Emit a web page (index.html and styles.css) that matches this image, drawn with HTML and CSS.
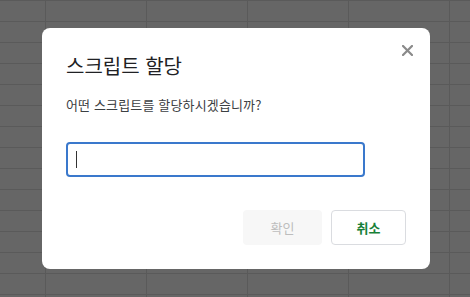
FILE: index.html
```html
<!DOCTYPE html>
<html lang="ko">
<head>
  <meta charset="UTF-8">
  <title>스크립트 할당</title>
  <link rel="stylesheet" href="styles.css">
</head>
<body>
  <div class="dialog">
    <button class="close-btn" aria-label="닫기">
      <svg width="11" height="11" viewBox="0 0 11 11">
        <path d="M1 1 L10 10 M10 1 L1 10" stroke="#8a8a8a" stroke-width="2.2" stroke-linecap="square"/>
      </svg>
    </button>
    <div class="dialog-title">스크립트 할당</div>
    <div class="dialog-text">어떤 스크립트를 할당하시겠습니까?</div>
    <div class="input-box"><span class="caret"></span></div>
    <div class="dialog-buttons">
      <button class="btn btn-ok">확인</button>
      <button class="btn btn-cancel">취소</button>
    </div>
  </div>
</body>
</html>
```

FILE: styles.css
```css
html, body {
  margin: 0;
  height: 100%;
}
body {
  font-family: "Noto Sans CJK KR", "Noto Sans", sans-serif;
  background-color: #666666;
  background-image:
    linear-gradient(to right, #5a5a5a 1px, transparent 1px),
    linear-gradient(to bottom, #5a5a5a 1px, transparent 1px);
  background-size: 101px 21px;
  background-position: 45px 0, 0 0;
  box-sizing: border-box;
  padding-left: 2px;
  display: flex;
  align-items: center;
  justify-content: center;
}
.dialog {
  position: relative;
  box-sizing: border-box;
  width: 388px;
  height: 241px;
  background: white;
  border-radius: 8px;
  padding: 24px;
  display: flex;
  flex-direction: column;
}
.close-btn {
  position: absolute;
  top: 12px;
  right: 12px;
  width: 21px;
  height: 21px;
  padding: 0;
  border: none;
  background: none;
  display: flex;
  align-items: center;
  justify-content: center;
}
.dialog-title {
  font-size: 20px;
  line-height: 28px;
  color: #202124;
}
.dialog-text {
  margin-top: 16px;
  font-size: 13px;
  line-height: 18px;
  color: #3c4043;
  letter-spacing: 0.15px;
}
.input-box {
  margin-top: 28px;
  box-sizing: border-box;
  width: 299px;
  height: 35px;
  border: 2px solid #3a78cc;
  border-radius: 4px;
  display: flex;
  align-items: center;
  padding-left: 8px;
}
.caret {
  width: 1px;
  height: 17px;
  background: #333;
}
.dialog-buttons {
  margin-top: auto;
  display: flex;
  justify-content: flex-end;
  gap: 9px;
}
.btn {
  font-family: inherit;
  font-size: 13px;
  height: 35px;
  border-radius: 4px;
  padding: 0;
}
.btn-ok {
  width: 79px;
  border: none;
  background: #f7f7f7;
  color: #bdbdbd;
}
.btn-cancel {
  width: 75px;
  border: 1px solid #dadce0;
  background: white;
  color: #188038;
  font-weight: bold;
}
```
